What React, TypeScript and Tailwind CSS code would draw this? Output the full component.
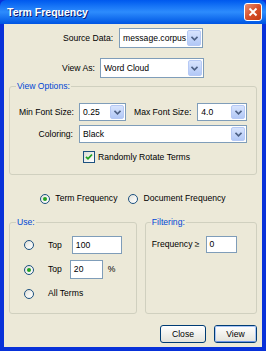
import React from 'react'

const font = "font-['Liberation_Sans',Arial,sans-serif]"

function Arrow() {
  return (
    <div className="flex h-full w-[14px] items-center justify-center rounded-[2px] border border-[#b6c9f5] bg-gradient-to-b from-[#d8e4fd] to-[#b2c8f6]">
      <svg width="7" height="5" viewBox="0 0 7 5">
        <path d="M0.5 0.8 L3.5 3.8 L6.5 0.8" stroke="#4d6185" strokeWidth="1.6" fill="none" />
      </svg>
    </div>
  )
}

function Combo({ value, className }: { value: string; className: string }) {
  return (
    <div className={`flex shrink-0 items-center border border-[#7f9db9] bg-white p-[1px] ${className}`}>
      <span className="flex-1 truncate pl-[2px] text-black">{value}</span>
      <Arrow />
    </div>
  )
}

function TextBox({ value, className }: { value: string; className: string }) {
  return (
    <div className={`flex shrink-0 items-center border border-[#7f9db9] bg-white pl-[3px] text-black ${className}`}>
      {value}
    </div>
  )
}

function Radio({ checked }: { checked?: boolean }) {
  return (
    <div className="flex h-[10px] w-[10px] shrink-0 items-center justify-center rounded-full border border-[#1c5180] bg-gradient-to-br from-[#dcdcd5] via-[#f3f3ef] to-white">
      {checked && <div className="h-[4px] w-[4px] rounded-full bg-[#21a121]" />}
    </div>
  )
}

function Check() {
  return (
    <div className="flex h-[12px] w-[12px] shrink-0 items-center justify-center border border-[#1c5180] bg-gradient-to-br from-[#dcdcd5] to-white">
      <svg width="8" height="8" viewBox="0 0 8 8">
        <path d="M1 3.8 L3 5.8 L7 1.5" stroke="#21a121" strokeWidth="1.8" fill="none" />
      </svg>
    </div>
  )
}

function Btn({ label, main }: { label: string; main?: boolean }) {
  return (
    <div className="rounded-[3px] border border-[#003c74] bg-gradient-to-b from-white to-[#e3e3db]">
      <div
        className={`flex h-[16px] items-center justify-center rounded-[2px] border ${
          main ? 'border-[#a8c4f4] border-b-[#6d93e6]' : 'border-transparent'
        } ${main ? 'w-[41px]' : 'w-[44px]'}`}
      >
        {label}
      </div>
    </div>
  )
}

export default function App() {
  return (
    <div className={`${font} w-[266px] h-[351px] whitespace-nowrap bg-[#0831d9] text-[8.6px] leading-[11px] text-black`}>
      <div className="flex h-[24px] items-center justify-between rounded-t-[6px] bg-gradient-to-b from-[#0058ee] via-[#2d8cfd] to-[#0054e3] px-[7px]">
        <span className="text-[10.5px] font-bold text-white [text-shadow:1px_1px_0_#0a1c74]">Term Frequency</span>
        <div className="-mr-[3px] flex h-[18px] w-[18px] items-center justify-center rounded-[3px] border border-white bg-gradient-to-br from-[#e88c6e] via-[#d8502a] to-[#c23a12]">
          <svg width="10" height="10" viewBox="0 0 10 10">
            <path d="M1.5 1.5 L8.5 8.5 M8.5 1.5 L1.5 8.5" stroke="white" strokeWidth="1.9" />
          </svg>
        </div>
      </div>
      <div className="mx-[4px] flex h-[323px] flex-col bg-[#ece9d8] px-[5px]">
        <div className="mt-[4px] flex items-center justify-center gap-[6px]">
          <span>Source Data:</span>
          <Combo value="message.corpus" className="h-[20px] w-[84px]" />
        </div>
        <div className="mt-[10px] flex items-center justify-center gap-[5px]">
          <span>View As:</span>
          <Combo value="Word Cloud" className="h-[20px] w-[104px]" />
        </div>

        <fieldset className="mt-[3px] rounded-[3px] border border-[#d0d0bf] pl-[9px] pr-[4px] pb-[11px]">
          <legend className="ml-[-3px] px-[1px] text-[#0046d5]">View Options:</legend>
          <div className="mt-[11px] flex items-center">
            <span className="w-[54px] shrink-0 text-right">Min Font Size:</span>
            <Combo value="0.25" className="ml-[6px] h-[18px] w-[47px]" />
            <span className="ml-[8px] shrink-0">Max Font Size:</span>
            <Combo value="4.0" className="ml-[6px] h-[18px] w-[50px]" />
          </div>
          <div className="mt-[4px] flex items-center">
            <span className="w-[54px] shrink-0 text-right">Coloring:</span>
            <Combo value="Black" className="ml-[6px] h-[18px] w-[168px]" />
          </div>
          <div className="mt-[8px] flex items-center pl-[64px]">
            <Check />
            <span className="ml-[3px]">Randomly Rotate Terms</span>
          </div>
        </fieldset>

        <div className="mt-[18px] flex items-center justify-center">
          <Radio checked />
          <span className="ml-[5px]">Term Frequency</span>
          <div className="ml-[11px]">
            <Radio />
          </div>
          <span className="ml-[5px]">Document Frequency</span>
        </div>

        <div className="mt-[13px] flex gap-[8px]">
          <fieldset className="h-[97px] w-[128px] rounded-[3px] border border-[#d0d0bf] px-[14px]">
            <legend className="ml-[-8px] px-[1px] text-[#0046d5]">Use:</legend>
            <div className="mt-[8px] flex items-center">
              <Radio />
              <span className="ml-[14px]">Top</span>
              <TextBox value="100" className="ml-[10px] h-[18px] w-[50px]" />
            </div>
            <div className="mt-[6px] flex items-center">
              <Radio checked />
              <span className="ml-[14px]">Top</span>
              <TextBox value="20" className="ml-[8px] h-[19px] w-[33px]" />
              <span className="ml-[5px]">%</span>
            </div>
            <div className="mt-[9px] flex items-center">
              <Radio />
              <span className="ml-[14px]">All Terms</span>
            </div>
          </fieldset>
          <fieldset className="h-[97px] w-[113px] rounded-[3px] border border-[#d0d0bf] px-[6px]">
            <legend className="ml-[-1px] px-[1px] text-[#0046d5]">Filtering:</legend>
            <div className="mt-[8px] flex items-center">
              <span>Frequency ≥</span>
              <TextBox value="0" className="ml-[6px] h-[17px] w-[31px]" />
            </div>
          </fieldset>
        </div>

        <div className="mt-[11px] flex justify-end gap-[8px]">
          <Btn label="Close" />
          <Btn label="View" main />
        </div>
      </div>
    </div>
  )
}
